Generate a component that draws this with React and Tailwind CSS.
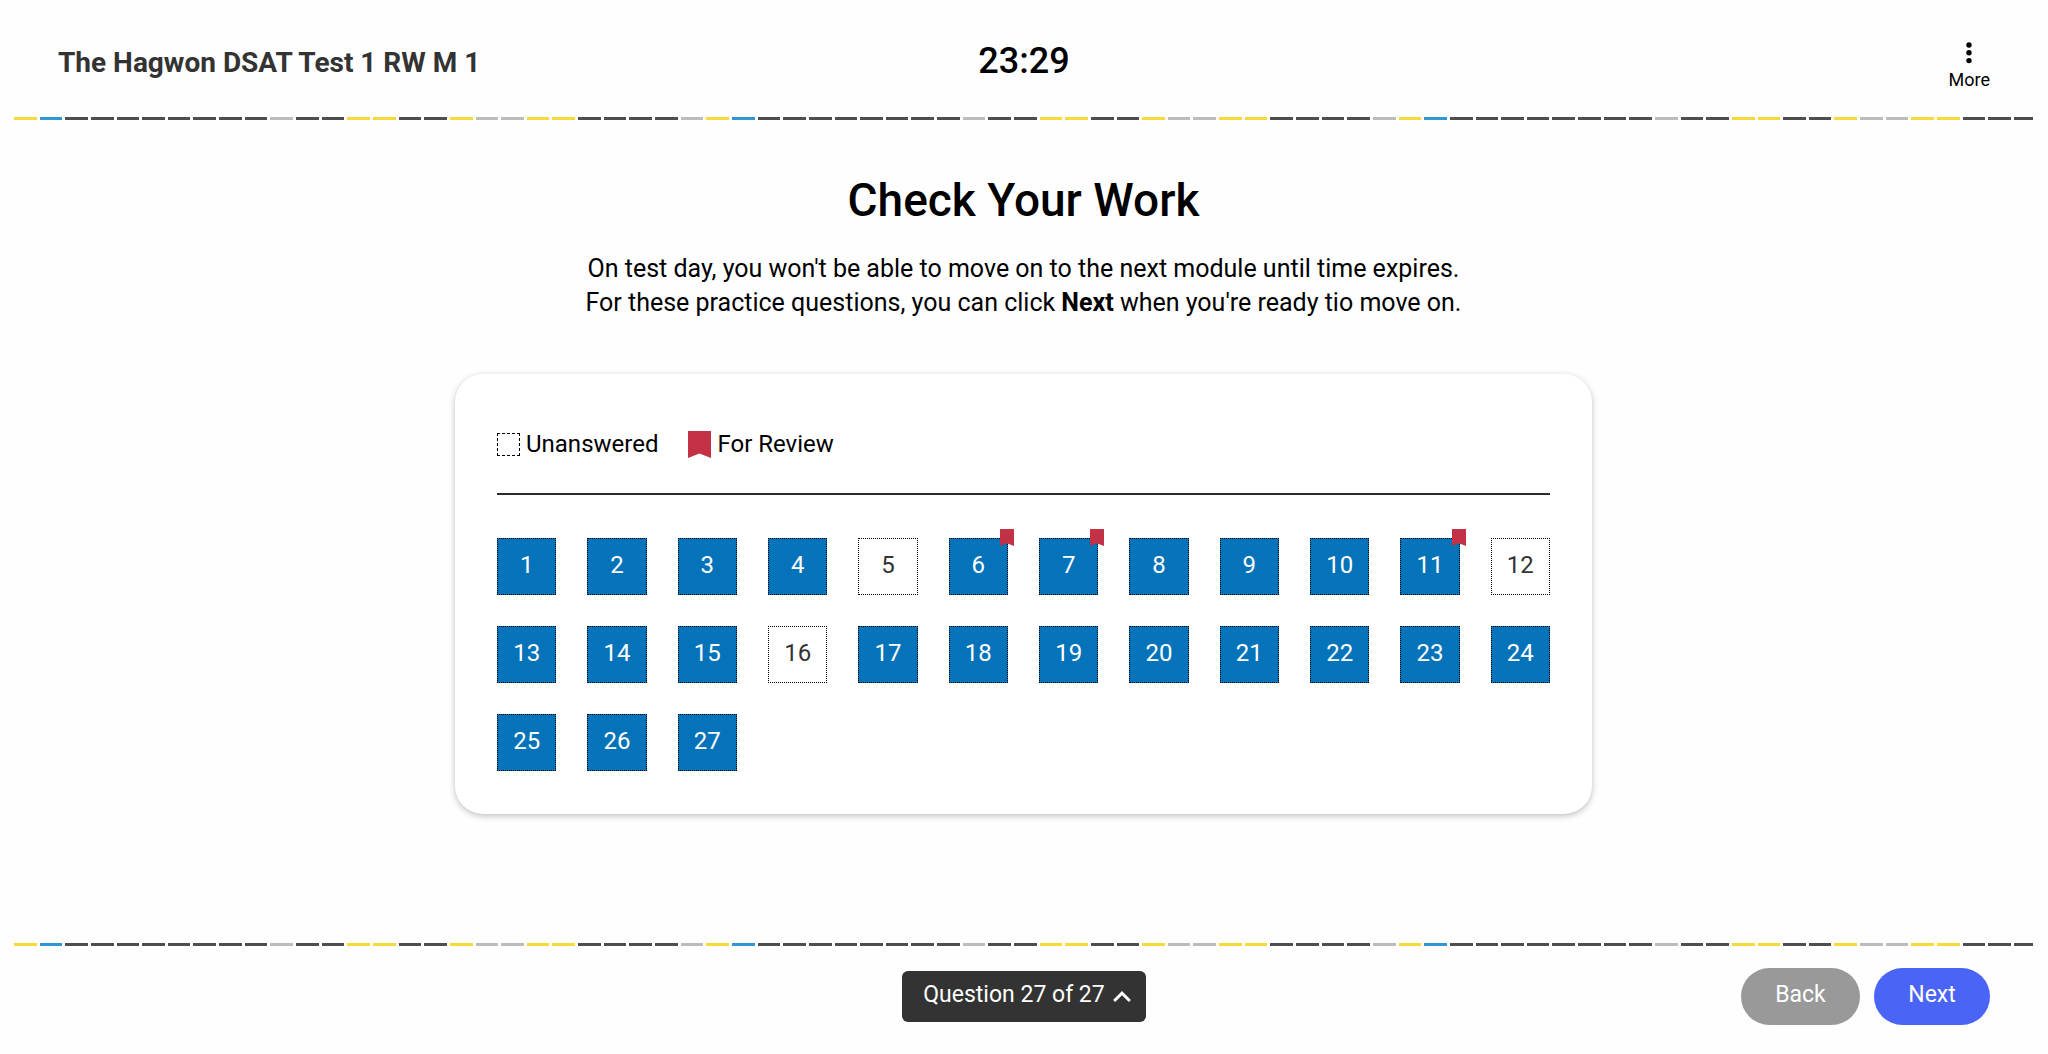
const QUESTION_COUNT = 27;
const UNANSWERED = [5, 12, 16];
const FOR_REVIEW = [6, 7, 11];

const DASH_COLORS = {
  y: "bg-[#f6da3a]",
  b: "bg-[#2f97d3]",
  d: "bg-[#4e4e4e]",
  l: "bg-[#bcbcbc]",
};

// one run of the strip, repeated across the page
const DASH_RUN = "ybddddddddlddyyddyllyyddddl";
const DASHES = DASH_RUN.repeat(3).slice(0, 79).split("");

function DashedStrip() {
  return (
    <div className="ml-[14px] mr-[15px] flex h-[3px] gap-[3px]">
      {DASHES.map((dash, i) => (
        <span
          key={i}
          className={`h-full ${DASH_COLORS[dash]} ${
            i === DASHES.length - 1 ? "w-[19px] flex-none" : "flex-1"
          }`}
        />
      ))}
    </div>
  );
}

function Bookmark({ className }) {
  return (
    <svg
      viewBox="0 0 22 27"
      preserveAspectRatio="none"
      className={className}
      aria-hidden="true"
    >
      <path d="M0 0h22v27l-11-4.5L0 27z" fill="#c23145" />
    </svg>
  );
}

function QuestionButton({ number }) {
  const unanswered = UNANSWERED.includes(number);

  return (
    <button
      type="button"
      className={`relative flex h-[57px] items-center justify-center border border-dotted border-black pb-1 text-2xl ${
        unanswered ? "bg-white text-[#333]" : "bg-[#0473b9] text-white"
      }`}
    >
      {number}
      {FOR_REVIEW.includes(number) && (
        <Bookmark className="absolute -right-[7px] -top-[10px] h-[17px] w-[14px]" />
      )}
    </button>
  );
}

export default function App() {
  const questions = Array.from({ length: QUESTION_COUNT }, (_, i) => i + 1);

  return (
    <div className="flex min-h-screen flex-col bg-[#fefefe] font-['Roboto',sans-serif] text-black">
      <header className="grid grid-cols-3 items-start px-[58px] pb-[25px] pt-[41px]">
        <h2 className="text-[28px] font-bold leading-[44px] text-[#333]">
          The Hagwon DSAT Test 1 RW M 1
        </h2>
        <p className="text-center text-4xl font-medium leading-[40px]">23:29</p>
        <button
          type="button"
          className="flex flex-col items-center gap-[3px] justify-self-end text-lg leading-6"
        >
          <svg viewBox="0 0 24 24" className="h-6 w-6" aria-hidden="true">
            <circle cx="12" cy="4" r="2.7" />
            <circle cx="12" cy="11.8" r="2.7" />
            <circle cx="12" cy="19.6" r="2.7" />
          </svg>
          More
        </button>
      </header>

      <DashedStrip />

      <main className="flex flex-1 flex-col items-center pb-12 pl-6 pr-[25px] pt-[52px]">
        <h1 className="text-[46px] font-medium leading-[56px]">
          Check Your Work
        </h1>
        <p className="mt-6 text-center text-[25px] leading-[34px]">
          On test day, you won't be able to move on to the next module until
          time expires.
          <br />
          For these practice questions, you can click <b>Next</b> when you're
          ready tio move on.
        </p>

        <section className="mt-[54px] w-full max-w-[1137px] rounded-[28px] bg-white px-[42px] pb-[43px] pt-[52px] shadow-[0_2px_6px_rgba(0,0,0,0.25)]">
          <div className="flex items-center gap-[30px] border-b-2 border-[#2b2b2b] pb-[31px] text-2xl leading-9">
            <div className="flex items-center gap-1.5">
              <span className="h-[23px] w-[23px] border border-dashed border-black" />
              Unanswered
            </div>
            <div className="flex items-center gap-1.5">
              <Bookmark className="h-[27px] w-[23px]" />
              For Review
            </div>
          </div>

          <div className="mt-[43px] grid grid-cols-12 gap-[31px]">
            {questions.map((number) => (
              <QuestionButton key={number} number={number} />
            ))}
          </div>
        </section>
      </main>

      <DashedStrip />

      <footer className="grid grid-cols-3 items-center px-[58px] pb-[29px] pt-[22px] text-[23px] text-white">
        <button
          type="button"
          className="col-start-2 flex h-[51px] items-center gap-2 justify-self-center rounded-md bg-[#333] pl-[21px] pr-[15px]"
        >
          <span className="pb-0.5">Question 27 of 27</span>
          <svg
            viewBox="6 8 12 7.41"
            className="h-[11px] w-[18px]"
            fill="currentColor"
            aria-hidden="true"
          >
            <path d="M7.41 15.41 12 10.83l4.59 4.58L18 14l-6-6-6 6z" />
          </svg>
        </button>
        <div className="flex gap-[14px] justify-self-end">
          <button
            type="button"
            className="h-[57px] w-[119px] rounded-full bg-[#999] pb-0.5"
          >
            Back
          </button>
          <button
            type="button"
            className="h-[57px] w-[116px] rounded-full bg-[#4a64f5] pb-0.5"
          >
            Next
          </button>
        </div>
      </footer>
    </div>
  );
}
